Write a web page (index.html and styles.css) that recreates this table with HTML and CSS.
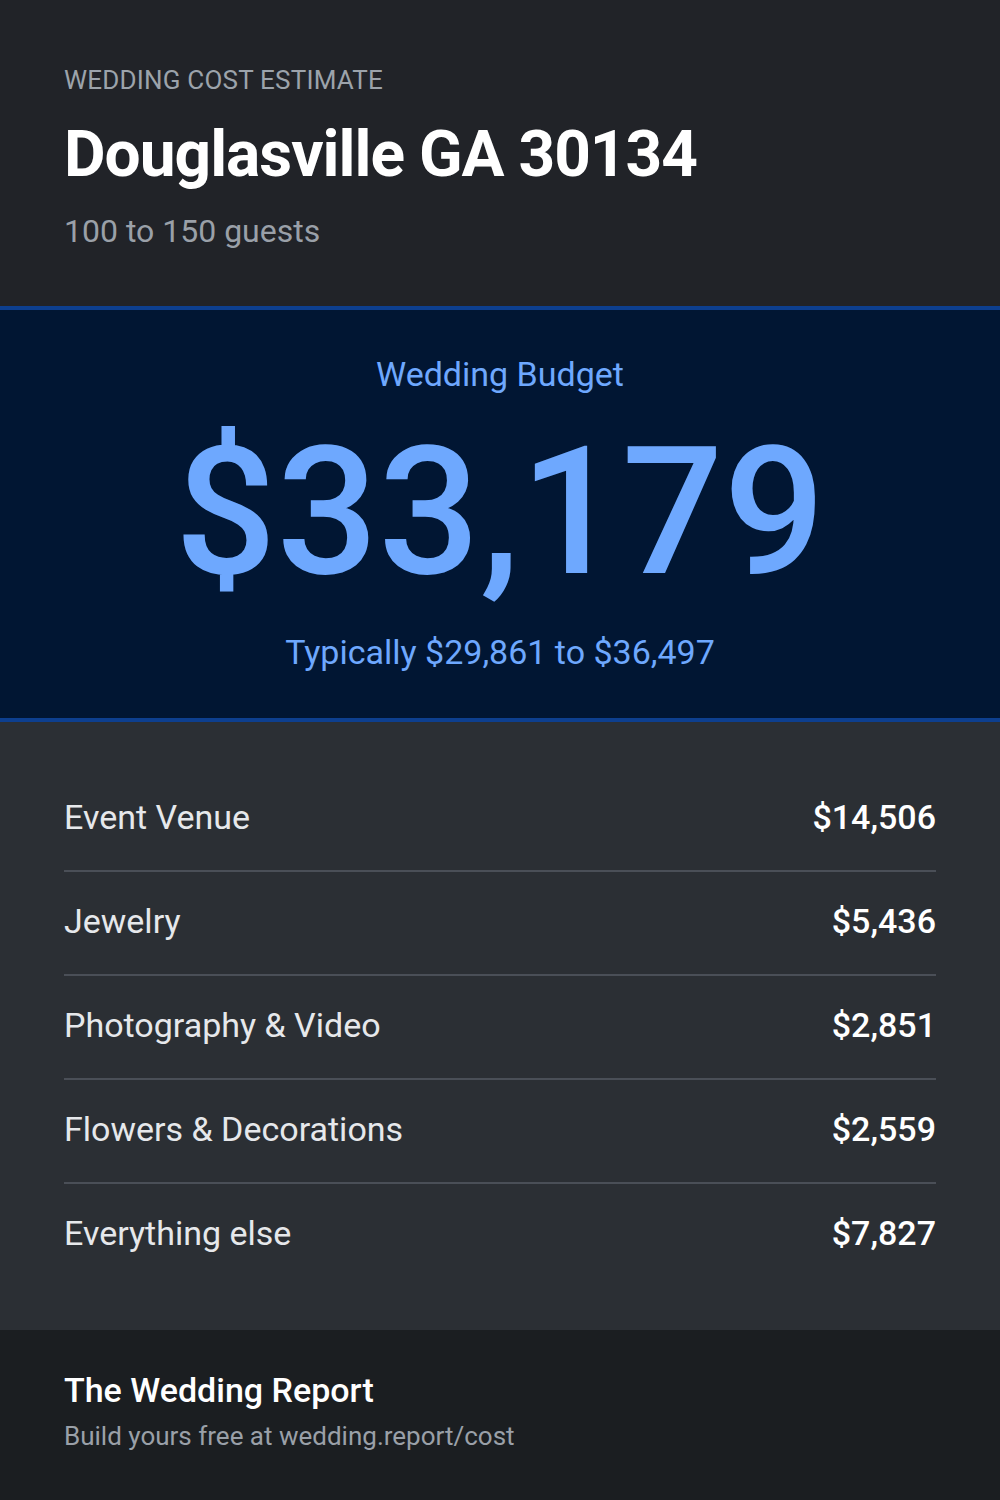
FILE: index.html
```html
<!DOCTYPE html>
<html lang="en">
<head>
    <meta charset="UTF-8">
    <meta name="viewport" content="width=device-width, initial-scale=1.0">
    <title>Wedding Cost Estimate</title>
    <link rel="stylesheet" href="styles.css">
</head>
<body>

<div id="card">
    <div id="header">
        <div class="eyebrow">WEDDING COST ESTIMATE</div>
        <div class="place">Douglasville GA 30134</div>
        <div class="guests">100 to 150 guests</div>
    </div>

    <div id="budget">
        <div class="budget-label">Wedding Budget</div>
        <div class="budget-total">$33,179</div>
        <div class="budget-range">Typically $29,861 to $36,497</div>
    </div>

    <div id="breakdown">
        <div class="line-item">
            <span class="item-name">Event Venue</span>
            <span class="item-cost">$14,506</span>
        </div>
        <div class="line-item">
            <span class="item-name">Jewelry</span>
            <span class="item-cost">$5,436</span>
        </div>
        <div class="line-item">
            <span class="item-name">Photography &amp; Video</span>
            <span class="item-cost">$2,851</span>
        </div>
        <div class="line-item">
            <span class="item-name">Flowers &amp; Decorations</span>
            <span class="item-cost">$2,559</span>
        </div>
        <div class="line-item">
            <span class="item-name">Everything else</span>
            <span class="item-cost">$7,827</span>
        </div>
    </div>

    <div id="footer">
        <div class="brand">The Wedding Report</div>
        <div class="cta">Build yours free at wedding.report/cost</div>
    </div>
</div>

</body>
</html>
```

FILE: styles.css
```css
body {
    margin: 0;
    font-family: Roboto, 'Liberation Sans', sans-serif;
    background: #1b1e21;
    color: white;
}

#card {
    width: 1000px;
    height: 1500px;
    display: flex;
    flex-direction: column;
}

#header {
    background: #212328;
    padding: 64px 64px 57px;
}
.eyebrow {
    font-size: 26px;
    line-height: 32px;
    letter-spacing: 0.2px;
    color: #9ca3ab;
}
.place {
    margin-top: 21px;
    font-size: 64px;
    line-height: 76px;
    font-weight: 700;
    letter-spacing: -1px;
    color: #ffffff;
}
.guests {
    margin-top: 20px;
    font-size: 32px;
    line-height: 36px;
    color: #9aa0a8;
}

#budget {
    background: #011633;
    border-top: 4px solid #0d3f8f;
    border-bottom: 4px solid #0d3f8f;
    padding: 44px 0 46px;
    text-align: center;
    color: #6ea8fe;
}
.budget-label {
    font-size: 34px;
    line-height: 40px;
}
.budget-total {
    margin-top: 30px;
    font-size: 179px;
    line-height: 176px;
    font-weight: 500;
}
.budget-range {
    margin-top: 32px;
    font-size: 34px;
    line-height: 40px;
}

#breakdown {
    background: #2b2f34;
    padding: 46px 64px 42px;
}
.line-item {
    display: flex;
    justify-content: space-between;
    align-items: center;
    padding: 30px 0 34px;
    line-height: 38px;
    border-bottom: 2px solid #4a4f57;
}
.line-item:last-child {
    border-bottom-color: transparent;
}
.item-name {
    font-size: 34px;
    color: #e6e8eb;
}
.item-cost {
    font-size: 34px;
    font-weight: 500;
    color: #ffffff;
}

#footer {
    flex: 1;
    background: #1b1e21;
    padding: 40px 64px 0;
}
.brand {
    font-size: 34px;
    line-height: 40px;
    font-weight: 500;
    color: #ffffff;
}
.cta {
    margin-top: 10px;
    font-size: 26px;
    line-height: 32px;
    color: #9aa0a8;
}
```
